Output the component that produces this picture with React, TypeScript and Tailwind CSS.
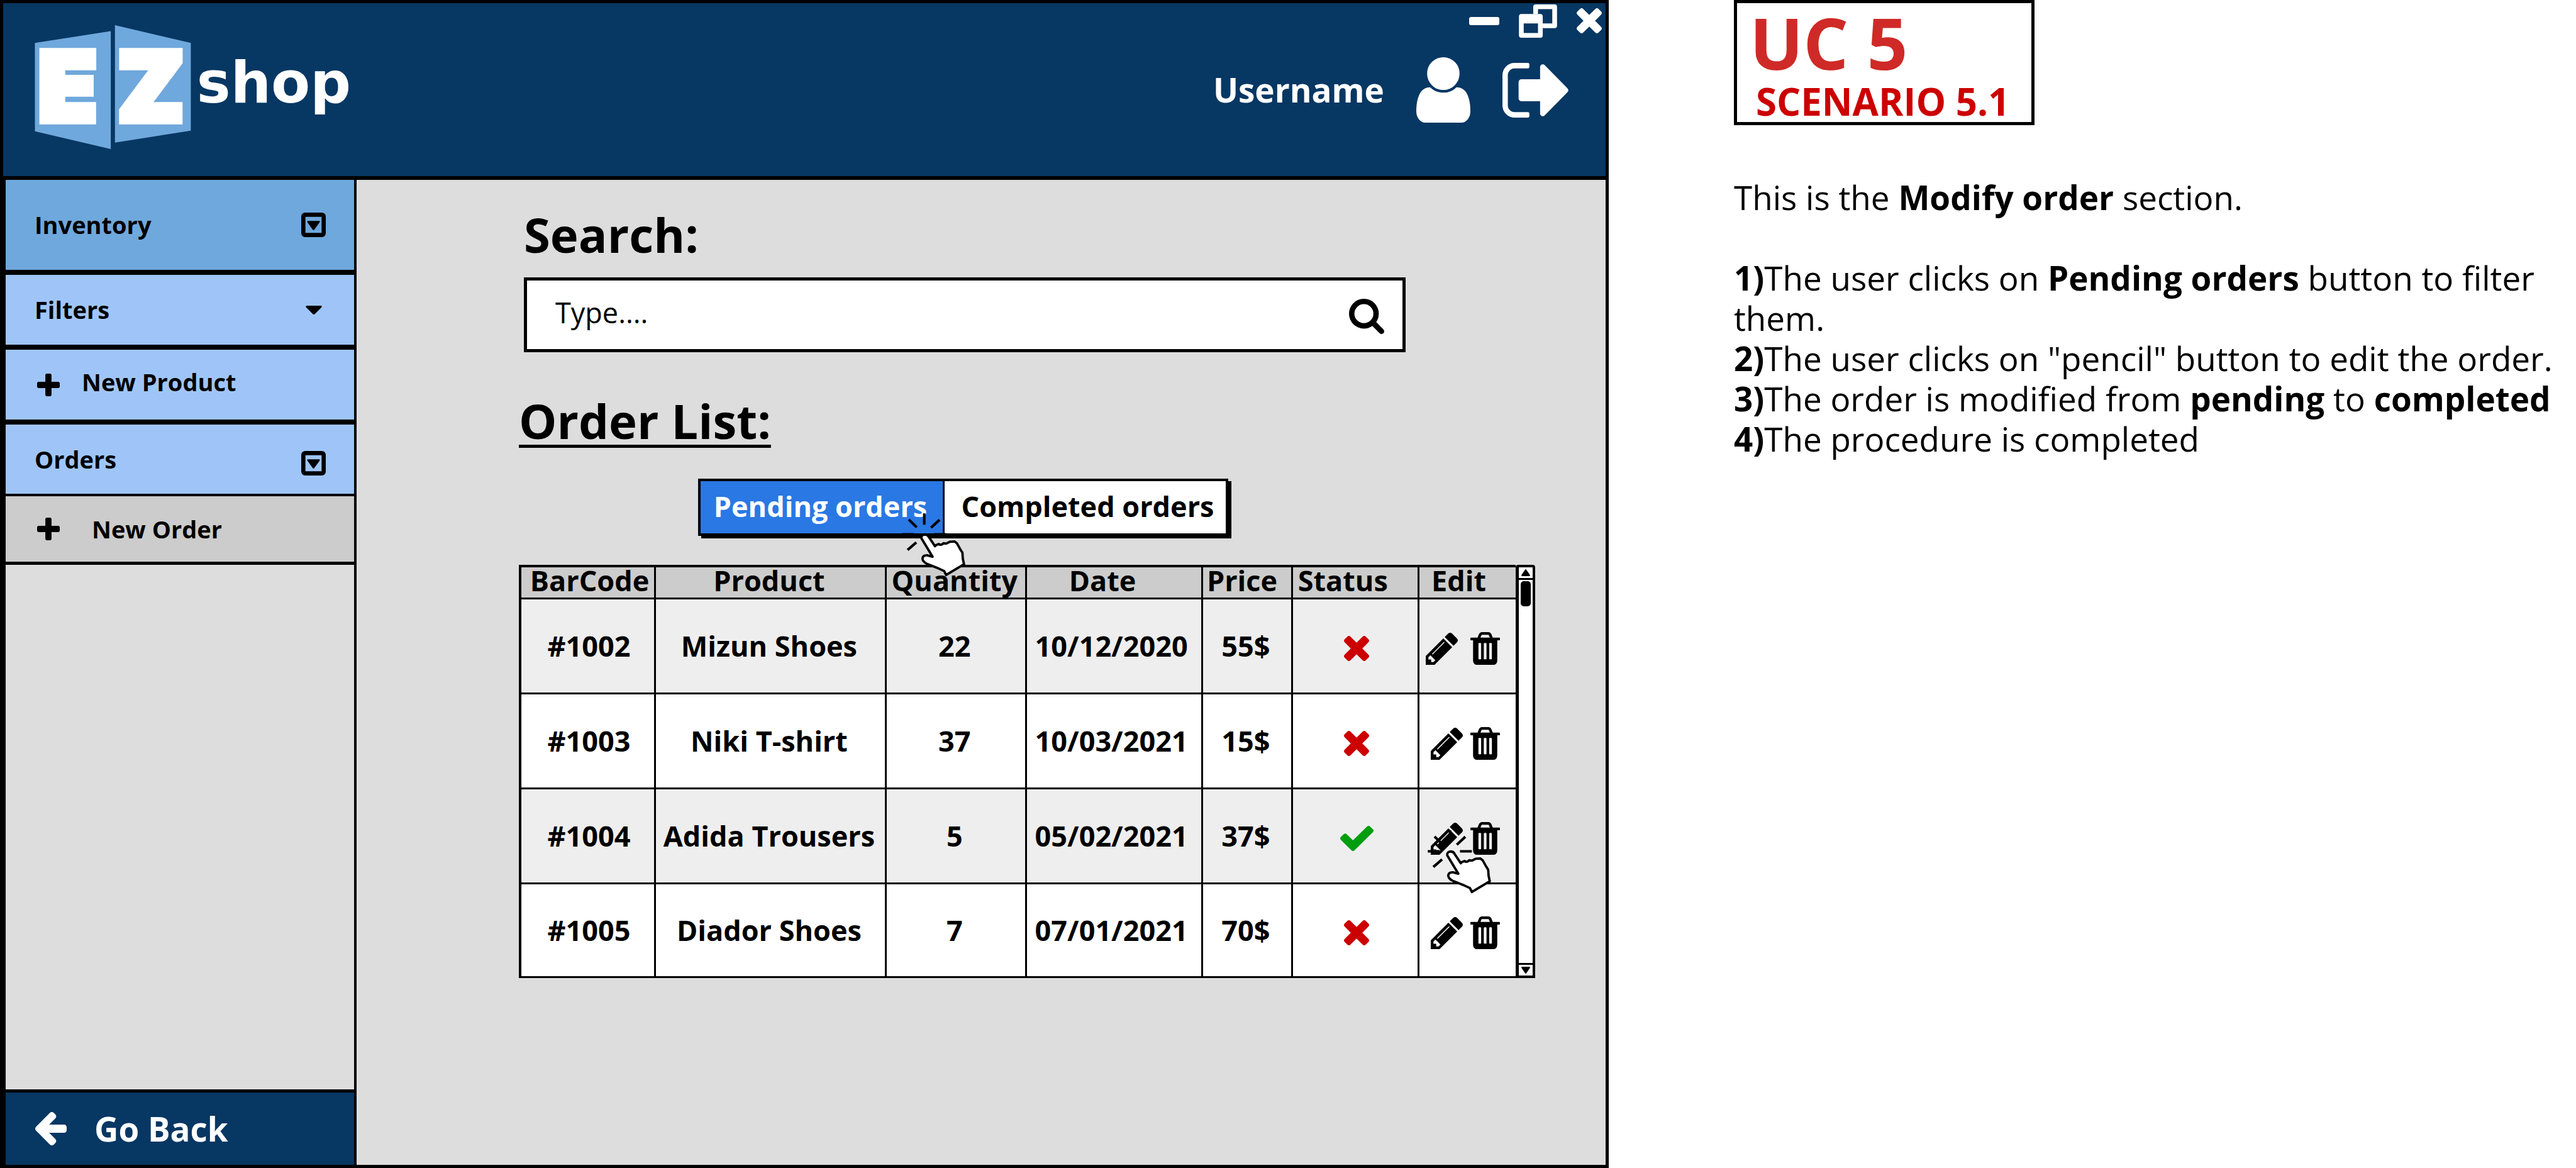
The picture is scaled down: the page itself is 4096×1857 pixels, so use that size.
import React from "react";

type IconProps = { className?: string };

function Glyph({ box, d, className }: IconProps & { box: string; d: string }) {
  return (
    <svg viewBox={box} className={className} fill="currentColor" preserveAspectRatio="none" aria-hidden="true">
      <path d={d} />
    </svg>
  );
}

const UserIcon = ({ className }: IconProps) => (
  <Glyph
    className={className}
    box="256 128 1280 1536"
    d="M1536 1399q0 109-62.5 187t-150.5 78h-854q-88 0-150.5-78t-62.5-187q0-85 8.5-160.5t31.5-152 58.5-131 94-89 134.500-34.500q131 128 313 128t313-128q76 0 134.500 34.500t94 89 58.500 131 31.500 152 8.500 160.500zm-256-887q0 159-112.500 271.500t-271.500 112.500-271.500-112.500-112.500-271.500 112.500-271.500 271.500-112.500 271.500 112.500 112.500 271.500z"
  />
);

const SignOutIcon = ({ className }: IconProps) => (
  <Glyph
    className={className}
    box="64 256 1587 1280"
    d="M704 1440q0 4 1 20t.5 26.500-3 23.500-10 19.500-20.500 6.500h-320q-119 0-203.500-84.500t-84.500-203.500v-704q0-119 84.500-203.500t203.500-84.500h320q13 0 22.500 9.500t9.500 22.500q0 4 1 20t.5 26.500-3 23.500-10 19.500-20.500 6.500h-320q-66 0-113 47t-47 113v704q0 66 47 113t113 47h312l11.500 1 11.500 3 8 5.500 7 9 2 13.500zm928-544q0 26-19 45l-544 544q-19 19-45 19t-45-19-19-45v-288h-448q-26 0-45-19t-19-45v-384q0-26 19-45t45-19h448v-288q0-26 19-45t45-19 45 19l544 544q19 19 19 45z"
  />
);

const TimesIcon = ({ className }: IconProps) => (
  <Glyph
    className={className}
    box="302 366 1188 1188"
    d="M1490 1322q0 40-28 68l-136 136q-28 28-68 28t-68-28l-294-294-294 294q-28 28-68 28t-68-28l-136-136q-28-28-28-68t28-68l294-294-294-294q-28-28-28-68t28-68l136-136q28-28 68-28t68 28l294 294 294-294q28-28 68-28t68 28l136 136q28 28 28 68t-28 68l-294 294 294 294q28 28 28 68z"
  />
);

const CheckIcon = ({ className }: IconProps) => (
  <Glyph
    className={className}
    box="121 334 1550 1188"
    d="M1671 566q0 40-28 68l-724 724-136 136q-28 28-68 28t-68-28l-136-136-362-362q-28-28-28-68t28-68l136-136q28-28 68-28t68 28l294 295 656-657q28-28 68-28t68 28l136 136q28 28 28 68z"
  />
);

const SearchIcon = ({ className }: IconProps) => (
  <Glyph
    className={className}
    box="64 128 1664 1664"
    d="M1216 832q0-185-131.500-316.500t-316.500-131.500-316.500 131.500-131.500 316.500 131.500 316.500 316.500 131.500 316.500-131.500 131.500-316.500zm512 832q0 52-38 90t-90 38q-54 0-90-38l-343-342q-179 124-399 124-143 0-273.500-55.500t-225-150-150-225-55.500-273.500 55.500-273.500 150-225 225-150 273.500-55.500 273.500 55.500 225 150 150 225 55.500 273.500q0 220-124 399l343 343q37 37 37 90z"
  />
);

const PlusIcon = ({ className }: IconProps) => (
  <Glyph
    className={className}
    box="192 128 1408 1408"
    d="M1600 736v192q0 40-28 68t-68 28h-416v416q0 40-28 68t-68 28h-192q-40 0-68-28t-28-68v-416h-416q-40 0-68-28t-28-68v-192q0-40 28-68t68-28h416v-416q0-40 28-68t68-28h192q40 0 68 28t28 68v416h416q40 0 68 28t28 68z"
  />
);

const ArrowLeftIcon = ({ className }: IconProps) => (
  <Glyph
    className={className}
    box="192 181 1472 1558"
    d="M1664 896v128q0 53-32.500 90.500t-84.500 37.500h-704l293 294q38 36 38 90t-38 90l-75 76q-37 37-90 37-52 0-91-37l-651-652q-37-37-37-90 0-52 37-91l651-650q38-38 91-38 52 0 90 38l75 74q38 38 38 91t-38 91l-293 293h704q52 0 84.500 37.500t32.500 90.500z"
  />
);

const PencilIcon = ({ className }: IconProps) => (
  <Glyph
    className={className}
    box="128 149 1515 1515"
    d="M491 1536l91-91-235-235-91 91v107h128v128h107zm523-928q0-22-22-22-10 0-17 7l-542 542q-7 7-7 17 0 22 22 22 10 0 17-7l542-542q7-7 7-17zm-54-192l416 416-832 832h-416v-416zm683 96q0 53-37 90l-166 166-416-416 166-165q36-38 90-38 53 0 91 38l235 234q37 39 37 91z"
  />
);

const TrashIcon = ({ className }: IconProps) => (
  <Glyph
    className={className}
    box="192 128 1408 1536"
    d="M704 1376v-704q0-14-9-23t-23-9h-64q-14 0-23 9t-9 23v704q0 14 9 23t23 9h64q14 0 23-9t9-23zm256 0v-704q0-14-9-23t-23-9h-64q-14 0-23 9t-9 23v704q0 14 9 23t23 9h64q14 0 23-9t9-23zm256 0v-704q0-14-9-23t-23-9h-64q-14 0-23 9t-9 23v704q0 14 9 23t23 9h64q14 0 23-9t9-23zm-544-992h448l-48-117q-7-9-17-11h-317q-10 2-17 11zm928 32v64q0 14-9 23t-23 9h-96v948q0 83-47 143.500t-113 60.500h-832q-66 0-113-58.500t-47-141.500v-952h-96q-14 0-23-9t-9-23v-64q0-14 9-23t23-9h309l70-167q15-37 54-63t79-26h320q40 0 79 26t54 63l70 167h309q14 0 23 9t9 23z"
  />
);

const CaretIcon = ({ className }: IconProps) => (
  <Glyph className={className} box="0 0 28 15" d="M2 0H26Q29 .5 27 3L16 14Q14 16 12 14L1 3Q-1 .5 2 0Z" />
);

function CaretBoxIcon({ className }: IconProps) {
  return (
    <svg viewBox="0 0 41 41" className={className} aria-hidden="true">
      <rect x="3.500" y="3.500" width="34" height="34" rx="3" fill="none" stroke="currentColor" strokeWidth="7" />
      <path d="M11 14H30Q32 14 30.500 16.500L22 28.500Q20.500 30.500 19 28.500L10.500 16.500Q9 14 11 14Z" fill="currentColor" />
    </svg>
  );
}

function RestoreIcon({ className }: IconProps) {
  return (
    <svg viewBox="0 0 64 56" className={className} fill="currentColor" aria-hidden="true">
      <path d="M24 16V4a4 4 0 0 1 4-4H60a4 4 0 0 1 4 4V36a4 4 0 0 1-4 4H40V32H56V8H32V16Z" />
      <path
        fillRule="evenodd"
        d="M4 16H36a4 4 0 0 1 4 4V52a4 4 0 0 1-4 4H4a4 4 0 0 1-4-4V20a4 4 0 0 1 4-4ZM8 32V48H32V32Z"
      />
    </svg>
  );
}

function ClickHand({ className }: IconProps) {
  return (
    <svg viewBox="50 62 326 326" className={className} aria-hidden="true">
      <g stroke="#000" strokeWidth="13" fill="none">
        <path d="M166 66V123M88 97L128 136M243 98L200 138M54 171H114M216 171H276M126 212L82 250" />
        <path
          fill="#fff"
          strokeWidth="12"
          strokeLinejoin="round"
          d="M152 192Q149 173 171 172Q184 173 190 186L220 231L228 224L240 220Q246 227 257 221L263 216Q274 220 282 215L294 209L318 207L330 216L345 243L358 264L360 294L366 322L334 341L276 376L266 356L240 344L178 319Q156 307 157 292Q160 276 180 277L208 284Z"
        />
      </g>
    </svg>
  );
}

function Logo({ className }: IconProps) {
  return (
    <svg viewBox="58 42 540 209" className={className} role="img" aria-label="EZ shop">
      <path d="M58 72L186 52V251L58 221Z" fill="#6fa8dc" />
      <path d="M193 42L321 72V220L193 240Z" fill="#6fa8dc" />
      <g fill="#fff">
        <g stroke="#fff" strokeWidth="12" fontSize="160" className="font-[Inter] font-black">
          <text x="64" y="203">E</text>
          <text x="198" y="203">Z</text>
        </g>
        <text x="331" y="172" className="font-['DejaVu_Sans'] font-bold" fontSize="96">shop</text>
      </g>
    </svg>
  );
}

function Header() {
  return (
    <header className="flex h-[286px] items-start justify-between border-t-5 border-b-6 border-black bg-[#073763] text-white">
      <Logo className="mt-[35px] ml-[50px] h-[197px] w-[510px] overflow-visible" />
      <div className="flex flex-col items-end">
        <div className="mr-1.5 flex h-14 items-center gap-[31px]">
          <button aria-label="Minimise" className="h-[13px] w-12 rounded-[3px] bg-white" />
          <button aria-label="Restore">
            <RestoreIcon className="h-[53px] w-[61px]" />
          </button>
          <button aria-label="Close">
            <TimesIcon className="size-10" />
          </button>
        </div>
        <div className="mt-[30px] mr-[58px] flex h-[104px] items-center gap-[51px]">
          <span className="text-[53px] font-bold">Username</span>
          <UserIcon className="h-[104px] w-[86px]" />
          <button aria-label="Sign out">
            <SignOutIcon className="h-[87px] w-[106px]" />
          </button>
        </div>
      </div>
    </header>
  );
}

function Sidebar() {
  return (
    <nav className="flex w-[562px] shrink-0 flex-col border-r-4 border-l-4 border-black text-[38px] font-bold">
      <button className="flex h-[151px] items-center justify-between border-b-8 border-black bg-[#6fa8dc] pr-[45px] pl-[46px]">
        Inventory
        <CaretBoxIcon className="size-[39px]" />
      </button>
      <button className="flex h-[119px] items-center justify-between border-b-8 border-black bg-[#9fc5f8] pr-[51px] pl-[46px]">
        Filters
        <CaretIcon className="h-[14px] w-[26px]" />
      </button>
      <button className="flex h-[119px] items-center gap-[35px] border-b-8 border-black bg-[#9fc5f8] pl-[50px]">
        <PlusIcon className="size-9" />
        <span className="pb-2">New Product</span>
      </button>
      <button className="flex h-[114px] items-center justify-between border-b-4 border-black bg-[#9fc5f8] pr-[45px] pl-[46px]">
        Orders
        <CaretBoxIcon className="mt-3 size-[39px]" />
      </button>
      <button className="flex h-[109px] items-center gap-[51px] border-b-5 border-black bg-[#cccccc] pl-[50px]">
        <PlusIcon className="size-9" />
        New Order
      </button>
      <button className="mt-auto flex h-[120px] items-center gap-[44px] border-t-5 border-black bg-[#073763] pl-[47px] text-[53px] text-white">
        <ArrowLeftIcon className="h-[53px] w-[50px]" />
        Go Back
      </button>
    </nav>
  );
}

const columns = [
  { label: "BarCode", className: "w-[13.54%] pl-1.5" },
  { label: "Product", className: "w-[23.2%] pr-1" },
  { label: "Quantity", className: "w-[14.1%] pr-1" },
  { label: "Date", className: "w-[17.7%] pr-9" },
  { label: "Price", className: "w-[9.1%] pr-4" },
  { label: "Status", className: "w-[12.7%] pr-10" },
  { label: "Edit", className: "pr-7" },
];

const orders = [
  { code: "#1002", product: "Mizun Shoes", quantity: 22, date: "10/12/2020", price: "55$", done: false },
  { code: "#1003", product: "Niki T-shirt", quantity: 37, date: "10/03/2021", price: "15$", done: false },
  { code: "#1004", product: "Adida Trousers", quantity: 5, date: "05/02/2021", price: "37$", done: true },
  { code: "#1005", product: "Diador Shoes", quantity: 7, date: "07/01/2021", price: "70$", done: false },
];

function OrdersTable() {
  return (
    <table className="flex-1 table-fixed border-separate border-spacing-0 border-t-4 border-l-4 border-black text-center text-[45px] font-bold">
      <thead>
        <tr className="bg-[#cccccc]">
          {columns.map((c) => (
            <th
              key={c.label}
              className={`h-[51px] border-r-3 border-b-3 border-black align-top leading-[41px] last:border-r-0 ${c.className}`}
            >
              {c.label}
            </th>
          ))}
        </tr>
      </thead>
      <tbody className="[&_td]:h-[151px] [&_td]:border-r-3 [&_td]:border-b-3 [&_td]:border-black [&_td:last-child]:border-r-0 [&_tr:last-child_td]:h-[149px]">
        {orders.map((o) => (
          <tr key={o.code} className="group odd:bg-[#eeeeee] even:bg-white">
            <td className="pl-1">{o.code}</td>
            <td className="pr-1">{o.product}</td>
            <td className="pr-1">{o.quantity}</td>
            <td className="pr-2">{o.date}</td>
            <td className="pr-1">{o.price}</td>
            <td className="pl-1">
              <div className="flex justify-center pt-2">
                {o.done ? (
                  <CheckIcon className="h-10 w-[53px] text-[#009e0f]" />
                ) : (
                  <TimesIcon className="size-10 text-[#cc0000]" />
                )}
              </div>
            </td>
            <td>
              <div className="relative flex items-center justify-end gap-3 pt-2 pr-[25px] group-first:gap-5">
                <button aria-label={`Edit ${o.code}`}>
                  <PencilIcon className="size-[51px]" />
                </button>
                <button aria-label={`Delete ${o.code}`}>
                  <TrashIcon className="h-[52px] w-[47px]" />
                </button>
                {o.done && <ClickHand className="absolute top-[20px] left-3 size-[103px] max-w-none" />}
              </div>
            </td>
          </tr>
        ))}
      </tbody>
    </table>
  );
}

function Scrollbar() {
  return (
    <div className="flex w-[31px] flex-col rounded-t-[4px] border-t-4 border-r-4 border-b-4 border-l-5 border-black bg-white">
      <button aria-label="Scroll up" className="flex h-5 items-center justify-center border-b-3 border-black">
        <CaretIcon className="h-[11px] w-[14px] rotate-180" />
      </button>
      <div className="flex flex-1 justify-center pt-0.5">
        <div className="h-10 w-4 rounded-[5px] bg-black" />
      </div>
      <button aria-label="Scroll down" className="flex h-5 items-center justify-center border-t-3 border-black">
        <CaretIcon className="h-[11px] w-[14px]" />
      </button>
    </div>
  );
}

function Main() {
  return (
    <main className="flex-1 pt-[39px] pr-[112px] pl-[258px]">
      <div className="mr-[206px] ml-2">
        <label htmlFor="search" className="block text-[76px] leading-24 font-bold">
          Search:
        </label>
        <div className="mt-5 flex h-[119px] items-center border-5 border-black bg-white pr-[29px]">
          <input
            id="search"
            placeholder="Type...."
            className="h-full min-w-0 flex-1 bg-transparent pb-2 pl-[45px] text-[45px] placeholder:text-black placeholder:opacity-100 focus:outline-none"
          />
          <button aria-label="Search" className="pt-1">
            <SearchIcon className="size-14" />
          </button>
        </div>
      </div>
      <h2 className="mt-[61px] text-[76px] leading-24 font-bold underline decoration-[5px] underline-offset-[9px]">
        Order List:
      </h2>
      <div className="mt-11 ml-[285px] flex h-[91px] w-[843px] border-4 border-black bg-white text-[45px] font-bold whitespace-nowrap shadow-[5px_4px_0_#000]">
        <button className="relative w-[388px] shrink-0 border-r-3 border-black bg-[#2a78e4] pr-1 pb-1 text-white">
          Pending orders
          <ClickHand className="absolute top-[50px] right-[-37px] z-10 size-[103px] max-w-none" />
        </button>
        <button className="flex-1 pb-1 pl-2">Completed orders</button>
      </div>
      <div className="mt-[46px] flex">
        <OrdersTable />
        <Scrollbar />
      </div>
    </main>
  );
}

function Notes() {
  return (
    <aside className="flex-1 pl-[199px]">
      <div className="w-[478px] border-5 border-black pl-5 font-bold whitespace-nowrap">
        <h1 className="text-[113px] leading-[124px] text-[#cf2a27]">UC 5</h1>
        <p className="pl-2.5 text-[60px] leading-[65px] text-[#cc0000]">SCENARIO 5.1</p>
      </div>
      <div className="mt-[83px] text-[53px] leading-16">
        <p>
          This is the <b>Modify order</b> section.
        </p>
        <p className="mt-16">
          <b>1)</b>The user clicks on <b>Pending orders</b> button to filter
          <br />
          them.
        </p>
        <p>
          <b>2)</b>The user clicks on "pencil" button to edit the order.
        </p>
        <p>
          <b>3)</b>The order is modified from <b>pending</b> to <b>completed</b>
        </p>
        <p>
          <b>4)</b>The procedure is completed
        </p>
      </div>
    </aside>
  );
}

export default function App() {
  return (
    <div className="flex min-h-screen bg-white font-['Open_Sans',sans-serif] text-black">
      <div className="flex w-[62.45%] shrink-0 flex-col border-r-5 border-b-5 border-l-5 border-black bg-[#dddddd]">
        <Header />
        <div className="flex flex-1">
          <Sidebar />
          <Main />
        </div>
      </div>
      <Notes />
    </div>
  );
}
